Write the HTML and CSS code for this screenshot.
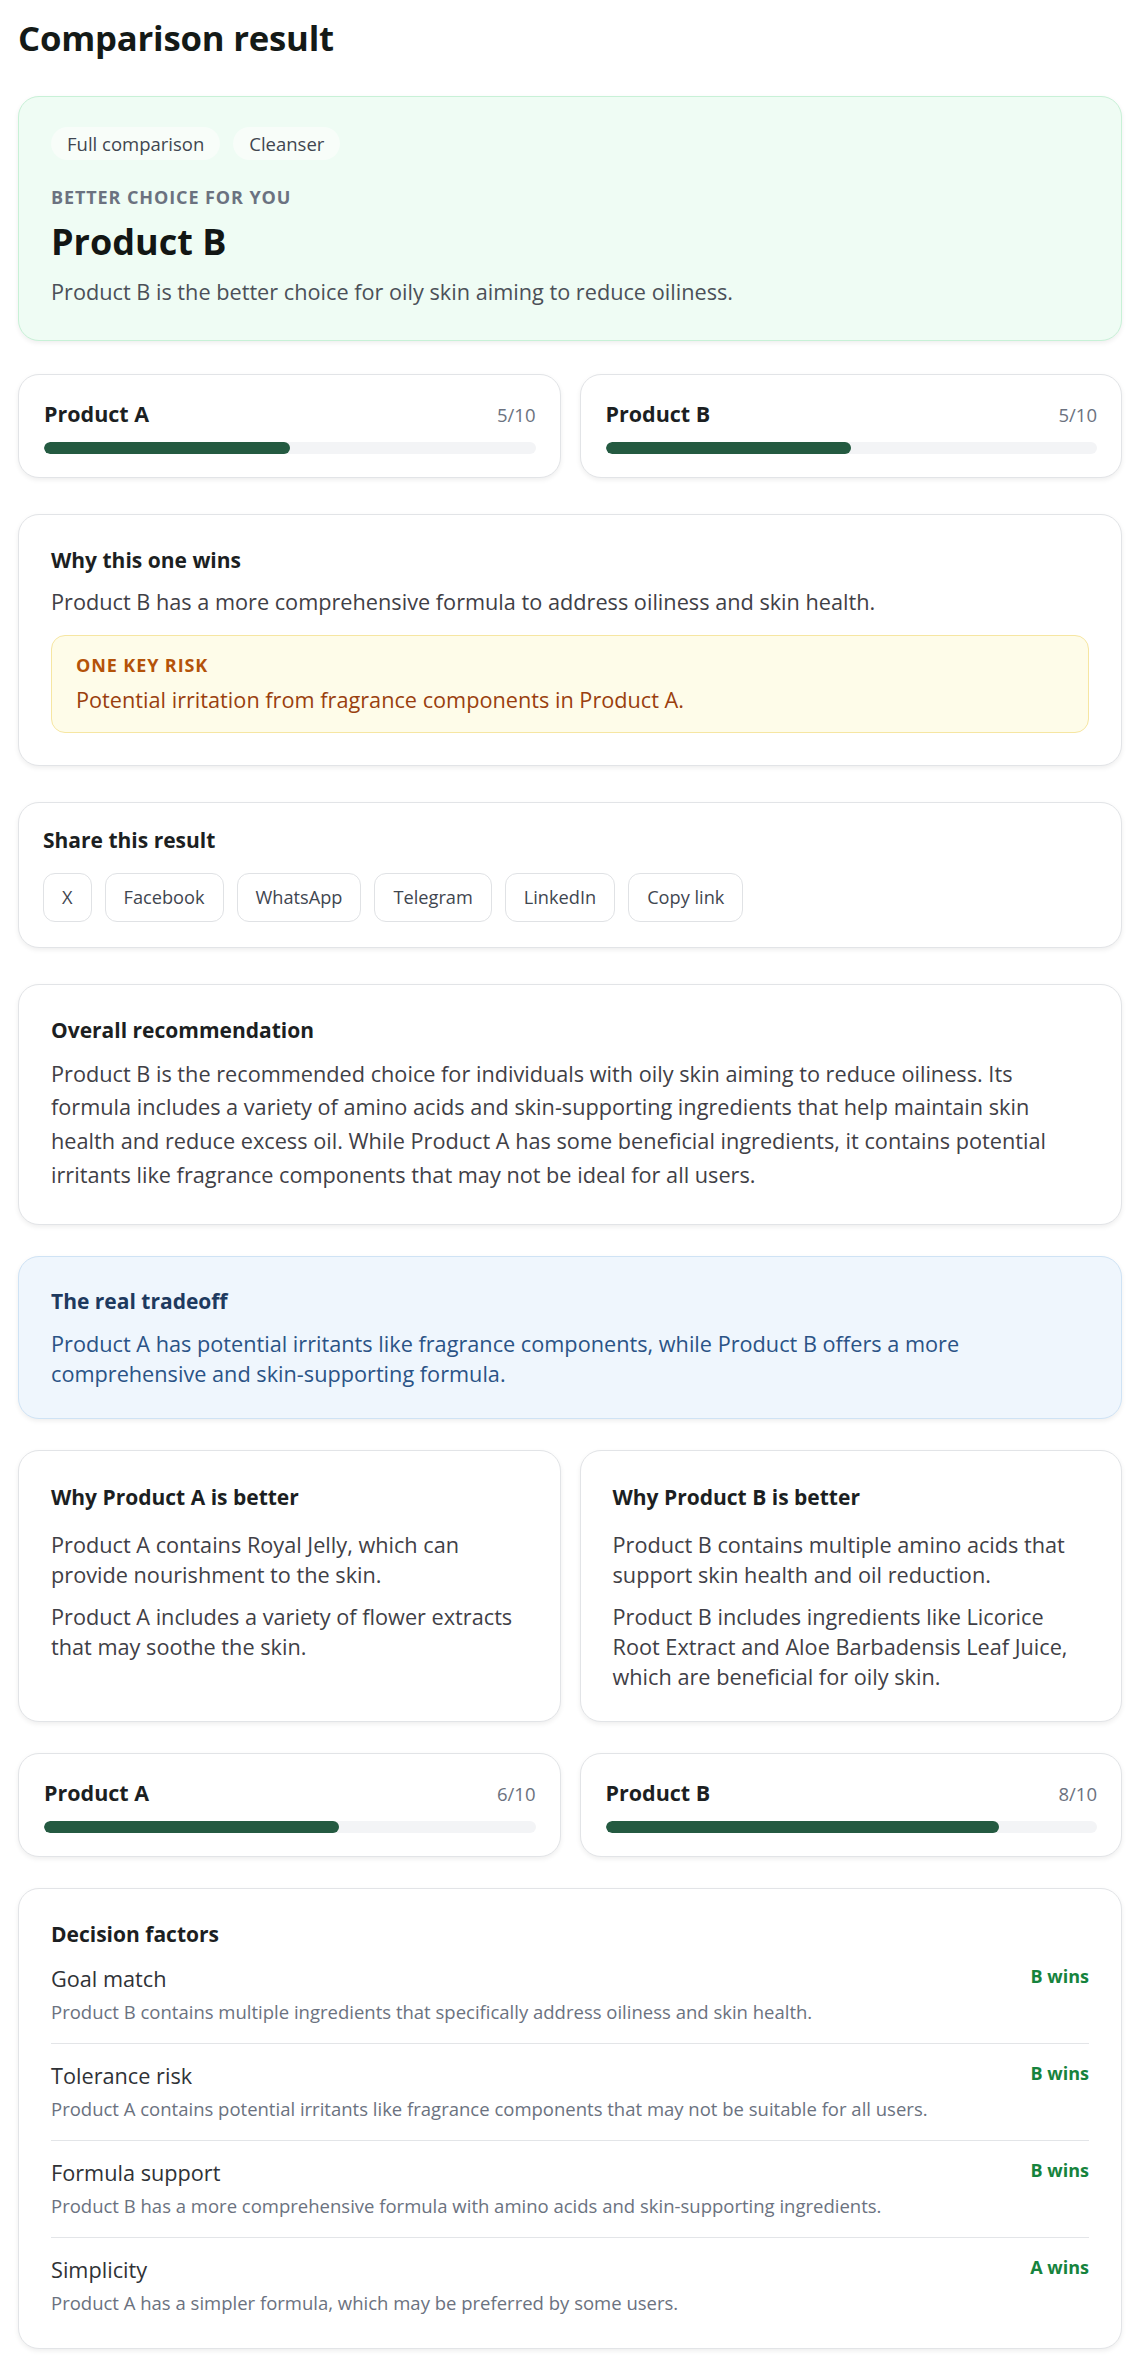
FILE: index.html
```html
<!DOCTYPE html>
<html lang="en">
<head>
<meta charset="utf-8">
<title>Comparison result</title>
<link rel="stylesheet" href="styles.css">
</head>
<body>
<main class="page">
  <h1 class="page-title">Comparison result</h1>

  <section class="card hero">
    <div class="chips">
      <span class="chip">Full comparison</span>
      <span class="chip">Cleanser</span>
    </div>
    <div class="eyebrow">BETTER CHOICE FOR YOU</div>
    <h2 class="hero-name">Product B</h2>
    <p class="hero-desc">Product B is the better choice for oily skin aiming to reduce oiliness.</p>
  </section>

  <div class="pair after-hero">
    <section class="card score">
      <div class="score-head"><span class="score-name">Product A</span><span class="score-val">5/10</span></div>
      <div class="track"><div class="fill" style="width:50%"></div></div>
    </section>
    <section class="card score">
      <div class="score-head"><span class="score-name">Product B</span><span class="score-val">5/10</span></div>
      <div class="track"><div class="fill" style="width:50%"></div></div>
    </section>
  </div>

  <section class="card padded why spaced">
    <h3 class="card-title">Why this one wins</h3>
    <p class="why-text">Product B has a more comprehensive formula to address oiliness and skin health.</p>
    <div class="risk">
      <div class="risk-label">ONE KEY RISK</div>
      <p class="risk-text">Potential irritation from fragrance components in Product A.</p>
    </div>
  </section>

  <section class="card share spaced">
    <h3 class="card-title">Share this result</h3>
    <div class="share-buttons">
      <button class="share-btn" type="button">X</button>
      <button class="share-btn" type="button">Facebook</button>
      <button class="share-btn" type="button">WhatsApp</button>
      <button class="share-btn" type="button">Telegram</button>
      <button class="share-btn" type="button">LinkedIn</button>
      <button class="share-btn" type="button">Copy link</button>
    </div>
  </section>

  <section class="card padded overall spaced">
    <h3 class="card-title">Overall recommendation</h3>
    <p class="overall-text">Product B is the recommended choice for individuals with oily skin aiming to reduce oiliness. Its formula includes a variety of amino acids and skin-supporting ingredients that help maintain skin health and reduce excess oil. While Product A has some beneficial ingredients, it contains potential irritants like fragrance components that may not be ideal for all users.</p>
  </section>

  <section class="card tradeoff">
    <h3 class="card-title tradeoff-title">The real tradeoff</h3>
    <p class="tradeoff-text">Product A has potential irritants like fragrance components, while Product B offers a more comprehensive and skin-supporting formula.</p>
  </section>

  <div class="pair">
    <section class="card padded pros">
      <h3 class="card-title">Why Product A is better</h3>
      <div class="pros-list">
        <p>Product A contains Royal Jelly, which can provide nourishment to the skin.</p>
        <p>Product A includes a variety of flower extracts that may soothe the skin.</p>
      </div>
    </section>
    <section class="card padded pros">
      <h3 class="card-title">Why Product B is better</h3>
      <div class="pros-list">
        <p>Product B contains multiple amino acids that support skin health and oil reduction.</p>
        <p>Product B includes ingredients like Licorice Root Extract and Aloe Barbadensis Leaf Juice, which are beneficial for oily skin.</p>
      </div>
    </section>
  </div>

  <div class="pair">
    <section class="card score">
      <div class="score-head"><span class="score-name">Product A</span><span class="score-val">6/10</span></div>
      <div class="track"><div class="fill" style="width:60%"></div></div>
    </section>
    <section class="card score">
      <div class="score-head"><span class="score-name">Product B</span><span class="score-val">8/10</span></div>
      <div class="track"><div class="fill" style="width:80%"></div></div>
    </section>
  </div>

  <section class="card padded factors">
    <h3 class="card-title">Decision factors</h3>
    <div class="factor">
      <div class="factor-body">
        <div class="factor-name">Goal match</div>
        <div class="factor-desc">Product B contains multiple ingredients that specifically address oiliness and skin health.</div>
      </div>
      <span class="factor-win">B wins</span>
    </div>
    <div class="factor">
      <div class="factor-body">
        <div class="factor-name">Tolerance risk</div>
        <div class="factor-desc">Product A contains potential irritants like fragrance components that may not be suitable for all users.</div>
      </div>
      <span class="factor-win">B wins</span>
    </div>
    <div class="factor">
      <div class="factor-body">
        <div class="factor-name">Formula support</div>
        <div class="factor-desc">Product B has a more comprehensive formula with amino acids and skin-supporting ingredients.</div>
      </div>
      <span class="factor-win">B wins</span>
    </div>
    <div class="factor">
      <div class="factor-body">
        <div class="factor-name">Simplicity</div>
        <div class="factor-desc">Product A has a simpler formula, which may be preferred by some users.</div>
      </div>
      <span class="factor-win">A wins</span>
    </div>
  </section>
</main>
</body>
</html>
```

FILE: styles.css
```css
* { box-sizing: border-box; }

html, body {
  margin: 0;
  padding: 0;
  background: #ffffff;
}

body {
  font-family: "Open Sans", "Noto Sans", "Liberation Sans", sans-serif;
  color: #3f4046;
  font-size: 21.7px;
}

p { margin: 0; }
h1, h2, h3 { margin: 0; }

.page {
  padding: 16px 19px 11px 18px;
  display: flex;
  flex-direction: column;
  gap: 31px;
}

.spaced { margin-top: 5px; }
.after-hero { margin-top: 2px; }

.page-title {
  font-size: 34.7px;
  line-height: 43px;
  font-weight: 700;
  color: #141a17;
  margin-bottom: 6px;
  letter-spacing: -0.2px;
}

.card {
  background: #ffffff;
  border: 1px solid #e2e4e7;
  border-radius: 21px;
  box-shadow: 0 2px 5px rgba(0, 0, 0, 0.07);
}

.padded { padding: 32px; }

.card-title {
  font-size: 21px;
  line-height: 27px;
  font-weight: 700;
  color: #1c1f22;
}

/* hero */
.hero {
  background: #effcf4;
  border-color: #c8f1d7;
  padding: 30px 32px 31px;
}

.chips {
  display: flex;
  gap: 13px;
}

.chip {
  height: 33px;
  display: inline-flex;
  align-items: center;
  padding: 0 16px;
  border-radius: 999px;
  background: #f8fdf9;
  font-size: 18.5px;
  color: #3f4650;
}

.eyebrow {
  margin-top: 25px;
  font-size: 18px;
  line-height: 25px;
  font-weight: 700;
  letter-spacing: 0.9px;
  color: #6b7280;
}

.hero-name {
  margin-top: 8px;
  font-size: 36px;
  line-height: 47px;
  font-weight: 700;
  color: #121614;
}

.hero-desc {
  margin-top: 10px;
  line-height: 33.6px;
  color: #4b5058;
}

/* pairs */
.pair {
  display: grid;
  grid-template-columns: 1fr 1fr;
  gap: 19px;
}

/* score */
.score { padding: 24px 24px 23px 25px; }

.score-head {
  display: flex;
  justify-content: space-between;
  align-items: baseline;
  line-height: 30px;
}

.score-name {
  font-size: 21.5px;
  font-weight: 700;
  color: #1c1f22;
}

.score-val {
  font-size: 18.5px;
  color: #6b7280;
}

.track {
  margin-top: 12px;
  height: 12px;
  border-radius: 999px;
  background: #f3f4f6;
  overflow: hidden;
}

.fill {
  height: 100%;
  border-radius: 999px;
  background: #245a41;
}

/* why */
.why-text {
  margin-top: 11px;
  line-height: 33.6px;
}

.risk {
  margin-top: 17px;
  background: #fefce9;
  border: 1px solid #f6e6a2;
  border-radius: 14px;
  padding: 17px 24px 15px;
}

.risk-label {
  font-size: 18px;
  line-height: 25px;
  font-weight: 700;
  letter-spacing: 0.9px;
  color: #b45309;
}

.risk-text {
  margin-top: 5px;
  line-height: 33.6px;
  color: #9a3f0e;
}

/* share */
.share { padding: 24px 24px 25px; }

.share-buttons {
  margin-top: 19px;
  display: flex;
  gap: 13px;
}

.share-btn {
  height: 49px;
  padding: 0 18px;
  border: 1px solid #e0e2e5;
  border-radius: 12px;
  background: #ffffff;
  font-family: inherit;
  font-size: 18.2px;
  color: #3f4650;
}

/* overall */
.overall { padding-bottom: 33px; }

.overall-text {
  margin-top: 13px;
  line-height: 33.6px;
}

/* tradeoff */
.tradeoff {
  background: #eff6fd;
  border-color: #cfe3f5;
  padding: 31px 32px 30px;
}

.tradeoff-title { color: #1e3a5f; }

.tradeoff-text {
  margin-top: 14px;
  line-height: 29.5px;
  color: #2a5386;
}

/* pros */
.pros { padding: 33px 32px 29px; }

.pros-list {
  margin-top: 19px;
  display: flex;
  flex-direction: column;
  gap: 12px;
  line-height: 30px;
}

/* factors */
.factors { padding-top: 32px; }

.factor {
  display: flex;
  justify-content: space-between;
  align-items: flex-start;
  gap: 24px;
  padding: 17px 0 18.5px;
  border-bottom: 1px solid #e3e5e8;
}

.factor:first-of-type { padding-top: 16px; }

.factor:last-child {
  border-bottom: none;
  padding-bottom: 0;
}

.factor-name {
  line-height: 29.5px;
  color: #2f3236;
}

.factor-desc {
  margin-top: 4px;
  font-size: 18.5px;
  line-height: 27px;
  color: #6b7280;
}

.factor-win {
  font-size: 18px;
  line-height: 25px;
  font-weight: 700;
  color: #16833d;
  white-space: nowrap;
}
```
